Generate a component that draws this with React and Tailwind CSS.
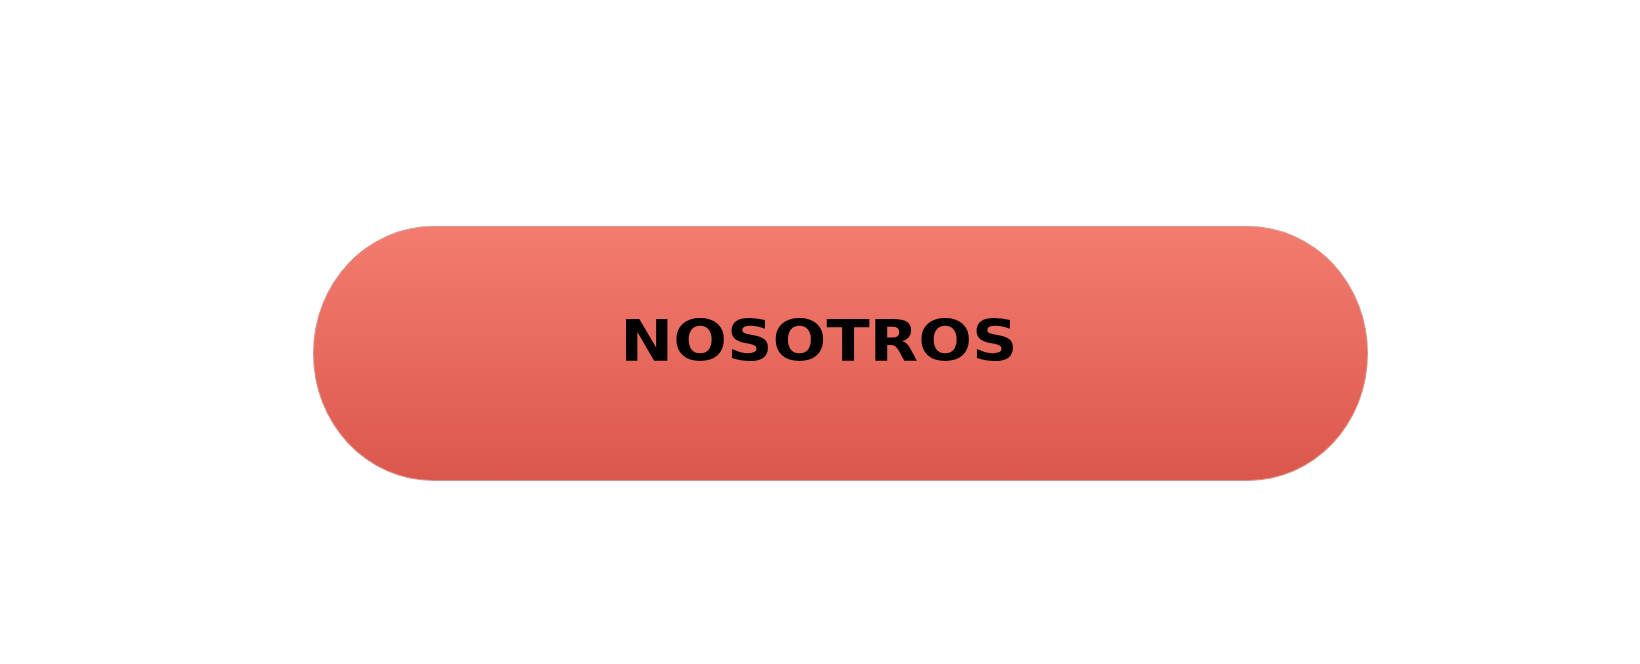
export default function App() {
  return (
    <div className="w-[1640px] h-[664px] bg-white flex items-start">
      <div className="ml-[313px] mt-[226px] w-[1055px] h-[255px] rounded-[120px/127px] border border-[#d9928c] bg-gradient-to-b from-[#f37c6f] to-[#db574b] flex items-center justify-center pr-[44px] pb-[25px]">
        <span
          className="text-[57px] font-bold text-black leading-none scale-x-[1.11] inline-block"
          style={{ fontFamily: '"DejaVu Sans", sans-serif' }}
        >
          NOSOTROS
        </span>
      </div>
    </div>
  );
}
